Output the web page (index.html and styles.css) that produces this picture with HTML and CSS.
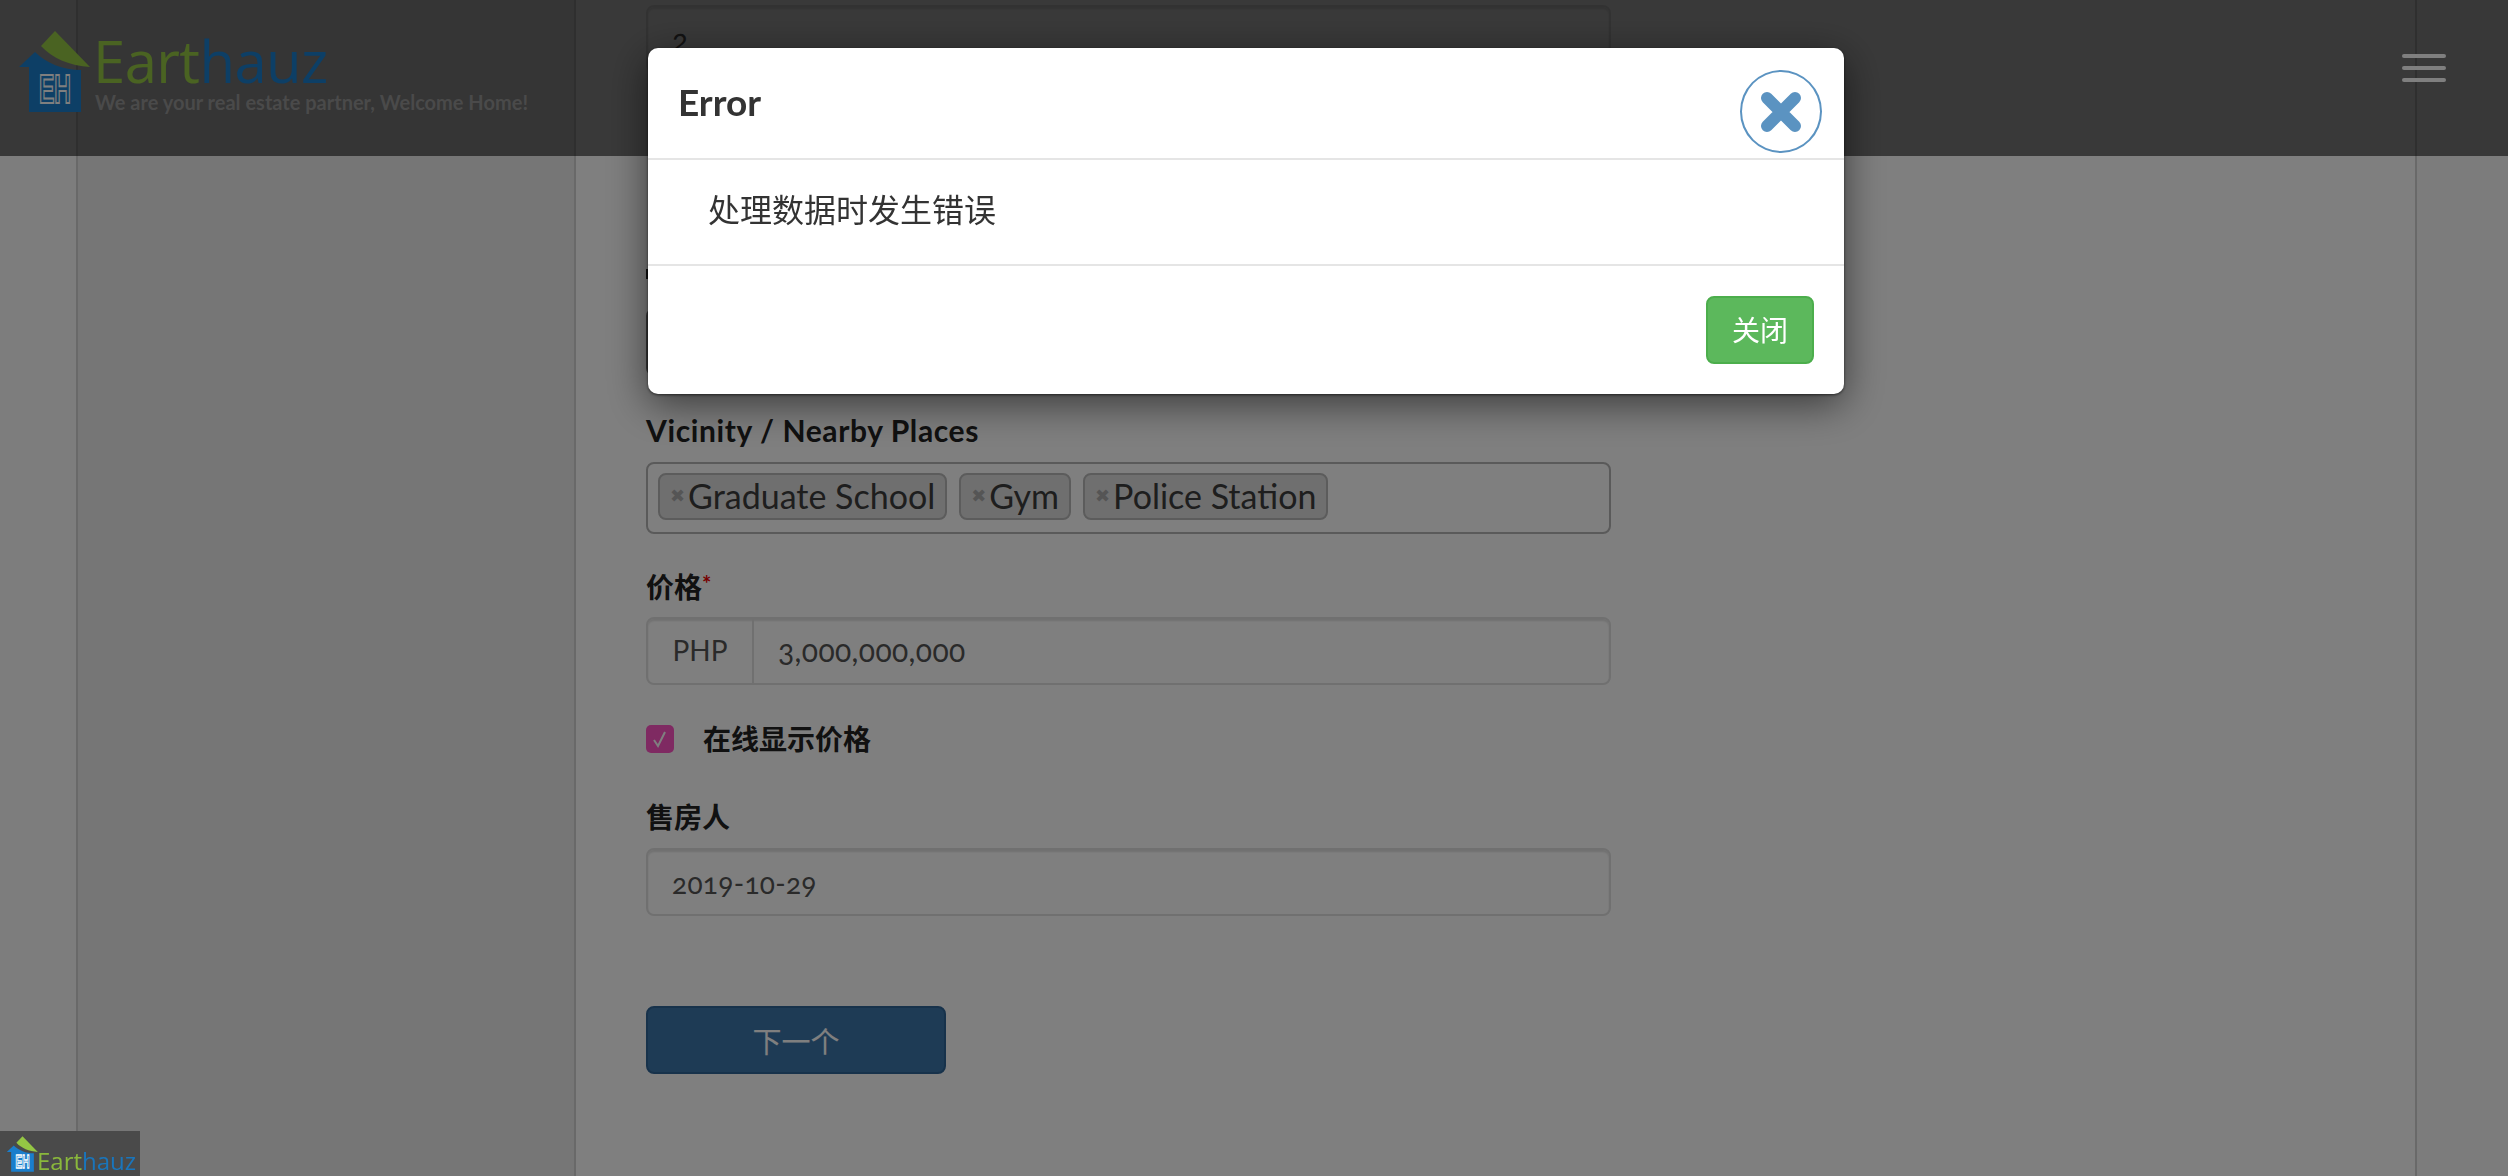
FILE: index.html
```html
<!DOCTYPE html>
<html lang="zh">
<head>
<meta charset="utf-8">
<title>Earthauz</title>
<link rel="stylesheet" href="styles.css">
</head>
<body>
<div class="page">
  <div class="rail"></div>
  <aside class="sidebar"></aside>
  <main class="main">
    <form class="form">
      <div class="input input-first">2</div>
      <div class="gap-hidden"><span class="stub"></span></div>
      <div class="input input-hidden"></div>

      <div class="field field-vicinity">
        <div class="label">Vicinity / Nearby Places</div>
        <div class="tags">
          <span class="tag"><span class="tag-x">✖</span>Graduate School</span>
          <span class="tag"><span class="tag-x">✖</span>Gym</span>
          <span class="tag"><span class="tag-x">✖</span>Police Station</span>
        </div>
      </div>

      <div class="field field-price">
        <div class="label label-cjk">价格<span class="star">*</span></div>
        <div class="input-group">
          <span class="addon">PHP</span>
          <span class="group-value">3,000,000,000</span>
        </div>
      </div>

      <div class="check-row">
        <span class="checkbox"><svg viewBox="0 0 28 28" width="28" height="28"><path d="M8 15 L12 21 L19 7" fill="none" stroke="#fff" stroke-width="2"/></svg></span>
        <span class="check-label">在线显示价格</span>
      </div>

      <div class="field field-seller">
        <div class="label label-cjk">售房人</div>
        <div class="input input-date">2019-10-29</div>
      </div>

      <button class="next" type="button">下一个</button>
    </form>
  </main>
  <div class="rail rail-right"></div>
</div>

<header class="topbar">
  <div class="brand">
    <svg class="brand-icon" viewBox="15 28 80 87" width="80" height="87">
      <path class="roof" d="M55 31 L90 67 C70 66 52 58 41 46 Z"/>
      <path class="walls" d="M35 52 L19 67 H29 V112 H81 V70 C63 70 46 63 35 52 Z"/>
      <text class="mono" x="39" y="103" textLength="32" lengthAdjust="spacingAndGlyphs">EH</text>
    </svg>
    <div class="brand-text">
      <div class="brand-name"><span class="green">Eart</span><span class="blue">hauz</span></div>
      <div class="brand-tag">We are your real estate partner, Welcome Home!</div>
    </div>
  </div>
  <div class="burger"><i></i><i></i><i></i></div>
</header>

<div class="backdrop"></div>

<div class="modal">
  <div class="modal-head">
    <h4 class="modal-title">Error</h4>
    <button class="modal-x" type="button" aria-label="close">
      <svg viewBox="0 0 82 82" width="82" height="82"><path d="M27 27 L55 55 M55 27 L27 55" fill="none" stroke="#5b93c1" stroke-width="12" stroke-linecap="round"/></svg>
    </button>
  </div>
  <div class="modal-body">处理数据时发生错误</div>
  <div class="modal-foot"><button class="btn-close" type="button">关闭</button></div>
</div>

<div class="mini-logo">
  <svg class="mini-icon" viewBox="15 28 80 87" width="35" height="38">
    <path class="roof" d="M55 31 L90 67 C70 66 52 58 41 46 Z"/>
    <path class="walls" d="M35 52 L19 67 H29 V112 H81 V70 C63 70 46 63 35 52 Z"/>
    <text class="mono mono-mini" x="39" y="103" textLength="32" lengthAdjust="spacingAndGlyphs">EH</text>
  </svg>
  <span class="mini-name"><span class="mini-green">Eart</span><span class="mini-blue">hauz</span></span>
</div>
</body>
</html>
```

FILE: styles.css
```css
* { box-sizing: border-box; }
html, body { margin: 0; height: 100%; }
body {
  height: 1176px;
  overflow: hidden;
  background: #fff;
  font-family: Lato, "Noto Sans CJK SC", sans-serif;
  color: #555;
}

/* page under the backdrop */
.page { display: flex; height: 1176px; }
.rail { width: 76px; background: #fbfbfb; }
.rail-right { width: 93px; background: #f8f8f8; border-left: 2px solid #d2d2d2; }
.sidebar {
  width: 500px;
  background: #ececec;
  border-left: 2px solid #d2d2d2;
  border-right: 2px solid #d2d2d2;
}
.main { flex: 1; padding: 5px 0 0 70px; background: #fff; }
.form { width: 965px; }

.input {
  height: 68px;
  border: 2px solid #e0e0e0;
  border-radius: 8px;
  box-shadow: inset 0 2px 2px rgba(0,0,0,.12);
  padding: 0 24px;
  font-size: 27px;
  line-height: 67px;
  font-feature-settings: "onum";
  color: #555;
}
.input-first { font-size: 30px; line-height: 64px; }
.input-date { font-size: 28px; letter-spacing: .3px; }
.gap-hidden { height: 235px; position: relative; }
.stub { position: absolute; left: 0; top: 196px; width: 3px; height: 10px; background: #222; }
.input-hidden { border-color: #777; }

.field-vicinity { margin-top: 34px; }
.field-price { margin-top: 37px; }
.field-seller { margin-top: 49px; }

.label {
  height: 40px;
  font-size: 30px;
  font-weight: 700;
  line-height: 40px;
  letter-spacing: .6px;
  color: #222;
}
.label-cjk { height: 46px; font-size: 28px; line-height: 26px; letter-spacing: 0; }
.field-seller .label-cjk { line-height: 31px; }
.star { color: #e00; font-size: 22px; vertical-align: 6px; }

.tags {
  margin-top: 12px;
  height: 72px;
  border: 2px solid #b4b4b4;
  border-radius: 8px;
  padding: 9px 10px;
  display: flex;
  gap: 12px;
}
.tag {
  height: 47px;
  padding: 0 10px 2px;
  display: flex;
  align-items: center;
  background: #dfdfdf;
  border: 2px solid #b8b8b8;
  border-radius: 8px;
  color: #3c3c3c;
  font-size: 34px;
}
.tag-x { color: #aaa; font-size: 18px; margin-right: 3px; font-family: "DejaVu Sans", sans-serif; }

.input-group {
  display: flex;
  height: 68px;
  border: 2px solid #e0e0e0;
  border-radius: 8px;
  box-shadow: inset 0 2px 2px rgba(0,0,0,.12);
  font-size: 28px;
  line-height: 63px;
}
.addon { width: 106px; text-align: center; border-right: 2px solid #e0e0e0; color: #555; }
.group-value { padding-left: 24px; font-size: 30px; letter-spacing: .4px; font-feature-settings: "onum"; }

.check-row { display: flex; align-items: center; margin-top: 40px; height: 28px; gap: 29px; }
.checkbox { width: 28px; height: 28px; border-radius: 5px; background: #ff54c4; display: block; }
.checkbox svg { display: block; }
.check-label { font-size: 28px; font-weight: 700; color: #222; padding-bottom: 3px; }

.next {
  display: block;
  margin-top: 90px;
  width: 300px;
  height: 68px;
  background: #3c76aa;
  border: 2px solid #2f6496;
  border-radius: 8px;
  color: #fff;
  font: 400 29px "Noto Sans CJK SC", sans-serif;
}

/* translucent top bar */
.topbar {
  position: absolute;
  left: 0; top: 0; right: 0;
  height: 156px;
  background: rgba(0,0,0,.55);
  display: flex;
  justify-content: space-between;
  padding: 28px 62px 0 15px;
}
.brand { display: flex; align-items: flex-start; }
.brand-icon { display: block; flex: none; }
.brand-text { margin-left: -2px; }
.brand-name { font: 400 58px/58px "Open Sans", sans-serif; letter-spacing: -.6px; margin-top: 4px; }
.green { color: #94c644; }
.blue { color: #1a7ecc; }
.brand-tag { font: 700 20px/24px Lato, sans-serif; color: #949494; margin-left: 2px; }
.roof { fill: #94c644; }
.walls { fill: #1a7ecc; }
.mono { font: 700 41px "Liberation Sans", sans-serif; fill: none; stroke: #fff; stroke-width: 2px; }
.mono-mini { stroke-width: 3px; }

.burger { display: flex; flex-direction: column; gap: 8px; padding-top: 26px; width: 44px; }
.burger i { display: block; height: 4px; background: #fff; border-radius: 2px; }

.backdrop { position: fixed; inset: 0; background: rgba(0,0,0,.5); }

/* modal */
.modal {
  position: fixed;
  left: 648px; top: 48px;
  width: 1196px; height: 346px;
  background: #fff;
  border-radius: 10px;
  box-shadow: 0 10px 40px rgba(0,0,0,.55), 0 1px 3px rgba(0,0,0,.6);
  color: #333;
}
.modal-head {
  height: 112px;
  border-bottom: 2px solid #e5e5e5;
  display: flex;
  justify-content: space-between;
  align-items: flex-start;
  padding: 22px 22px 0 30px;
}
.modal-title { margin: 9px 0 0; font-size: 37px; line-height: 46px; font-weight: 700; color: #333; }
.modal-x {
  width: 82px; height: 83px; padding: 0;
  background: #fff;
  border: 2px solid #5b93c1;
  border-radius: 50%;
  display: flex; align-items: center; justify-content: center;
}
.modal-x svg { display: block; flex: none; }
.modal-body {
  height: 106px;
  border-bottom: 2px solid #e5e5e5;
  padding-left: 60px;
  font: 400 32px/96px "Noto Sans CJK SC", sans-serif;
  color: #333;
}
.modal-foot { display: flex; justify-content: flex-end; padding: 30px 30px 0 0; }
.btn-close {
  width: 108px; height: 68px;
  background: #5cb85c;
  border: 2px solid #4cae4c;
  border-radius: 8px;
  color: #fff;
  font: 400 28px "Noto Sans CJK SC", sans-serif;
  padding: 0 0 3px;
}

/* corner watermark above the backdrop */
.mini-logo {
  position: fixed;
  left: 0; bottom: 0;
  width: 140px; height: 45px;
  background: #4a4a4a;
  display: flex;
  align-items: flex-end;
  padding-left: 5px;
}
.mini-icon { display: block; margin-bottom: 3px; flex: none; }
.mini-name { font: 400 24px/30px "Open Sans", sans-serif; margin-left: -3px; }
.mini-green { color: #8ab83c; }
.mini-blue { color: #1a75bb; }
```
